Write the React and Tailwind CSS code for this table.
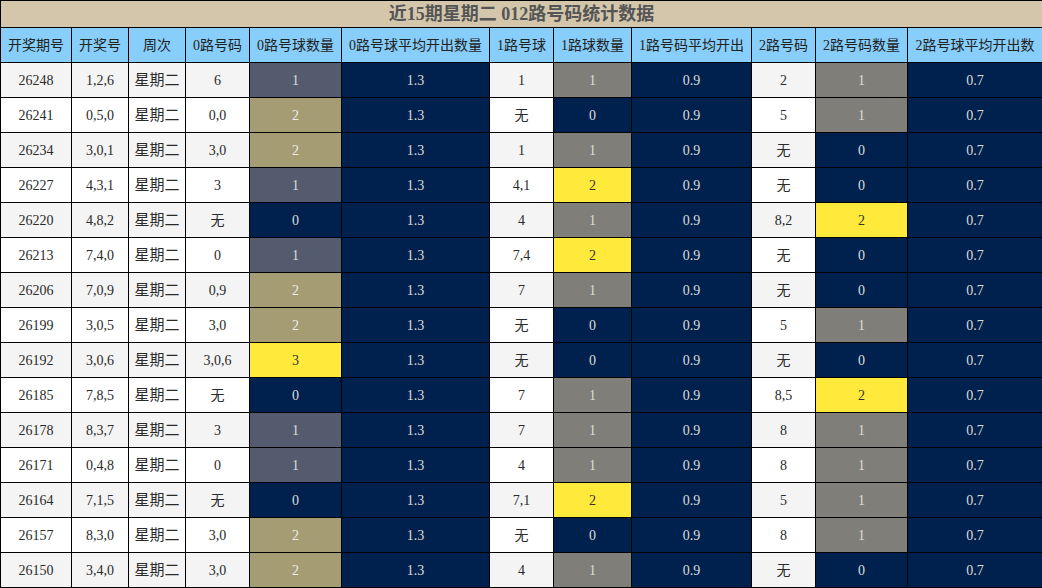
const headers = [
  '开奖期号', '开奖号', '周次', '0路号码', '0路号球数量', '0路号球平均开出数量',
  '1路号球', '1路球数量', '1路号码平均开出', '2路号码', '2路号码数量', '2路号球平均开出数',
]

const widths = ['w-[71px]', 'w-[57px]', 'w-[57px]', 'w-[64px]', 'w-[92px]', 'w-[148px]', 'w-[64px]', 'w-[78px]', 'w-[120px]', 'w-[64px]', 'w-[92px]', 'w-[135px]']

// [期号, 开奖号, 0路号码, 0路数量, 1路号球, 1路数量, 2路号码, 2路数量]
const rows = [
  ['26248', '1,2,6', '6', 1, '1', 1, '2', 1],
  ['26241', '0,5,0', '0,0', 2, '无', 0, '5', 1],
  ['26234', '3,0,1', '3,0', 2, '1', 1, '无', 0],
  ['26227', '4,3,1', '3', 1, '4,1', 2, '无', 0],
  ['26220', '4,8,2', '无', 0, '4', 1, '8,2', 2],
  ['26213', '7,4,0', '0', 1, '7,4', 2, '无', 0],
  ['26206', '7,0,9', '0,9', 2, '7', 1, '无', 0],
  ['26199', '3,0,5', '3,0', 2, '无', 0, '5', 1],
  ['26192', '3,0,6', '3,0,6', 3, '无', 0, '无', 0],
  ['26185', '7,8,5', '无', 0, '7', 1, '8,5', 2],
  ['26178', '8,3,7', '3', 1, '7', 1, '8', 1],
  ['26171', '0,4,8', '0', 1, '4', 1, '8', 1],
  ['26164', '7,1,5', '无', 0, '7,1', 2, '5', 1],
  ['26157', '8,3,0', '3,0', 2, '无', 0, '8', 1],
  ['26150', '3,4,0', '3,0', 2, '4', 1, '无', 0],
]

const zeroColors = {
  0: 'bg-[#00214d] text-[#dcdcdc]',
  1: 'bg-[#555b6e] text-[#dcdcdc]',
  2: 'bg-[#a59c74] text-[#ececec]',
  3: 'bg-[#ffea3b] text-[#333]',
}

const otherColors = {
  0: 'bg-[#00214d] text-[#dcdcdc]',
  1: 'bg-[#7f7e78] text-[#dcdcdc]',
  2: 'bg-[#ffea3b] text-[#333]',
}

const navy = 'bg-[#00214d] text-[#dcdcdc]'

function Cell({ className = '', children }) {
  return (
    <td className={`h-[35px] border border-black text-center align-middle p-0 ${className}`}>
      {children}
    </td>
  )
}

export default function App() {
  return (
    <div className="w-[1042px] h-[588px] bg-white overflow-hidden" style={{ fontFamily: '"Liberation Serif", "Noto Sans CJK SC", serif' }}>
      <table className="w-[1042px] table-fixed border-collapse text-[14px] text-[#2a2a2a]">
        <colgroup>
          {widths.map((w, i) => <col key={i} className={w} />)}
        </colgroup>
        <thead>
          <tr>
            <th colSpan={12} className="h-[27px] border border-black bg-[#d4c6ab] text-[18px] font-bold text-[#555] p-0 leading-none">
              近15期星期二 012路号码统计数据
            </th>
          </tr>
          <tr>
            {headers.map((h) => (
              <th key={h} className="h-[35px] border border-black bg-[#87cefa] font-normal text-[#222] p-0 whitespace-nowrap">
                {h}
              </th>
            ))}
          </tr>
        </thead>
        <tbody>
          {rows.map((r, i) => {
            const base = i % 2 === 0 ? 'bg-[#f4f4f4]' : 'bg-white'
            return (
              <tr key={r[0]}>
                <Cell className={base}>{r[0]}</Cell>
                <Cell className={base}>{r[1]}</Cell>
                <Cell className={`${base} text-[15px]`}>星期二</Cell>
                <Cell className={base}>{r[2]}</Cell>
                <Cell className={zeroColors[r[3]]}>{r[3]}</Cell>
                <Cell className={navy}>1.3</Cell>
                <Cell className={base}>{r[4]}</Cell>
                <Cell className={otherColors[r[5]]}>{r[5]}</Cell>
                <Cell className={navy}>0.9</Cell>
                <Cell className={base}>{r[6]}</Cell>
                <Cell className={otherColors[r[7]]}>{r[7]}</Cell>
                <Cell className={navy}>0.7</Cell>
              </tr>
            )
          })}
        </tbody>
      </table>
    </div>
  )
}
